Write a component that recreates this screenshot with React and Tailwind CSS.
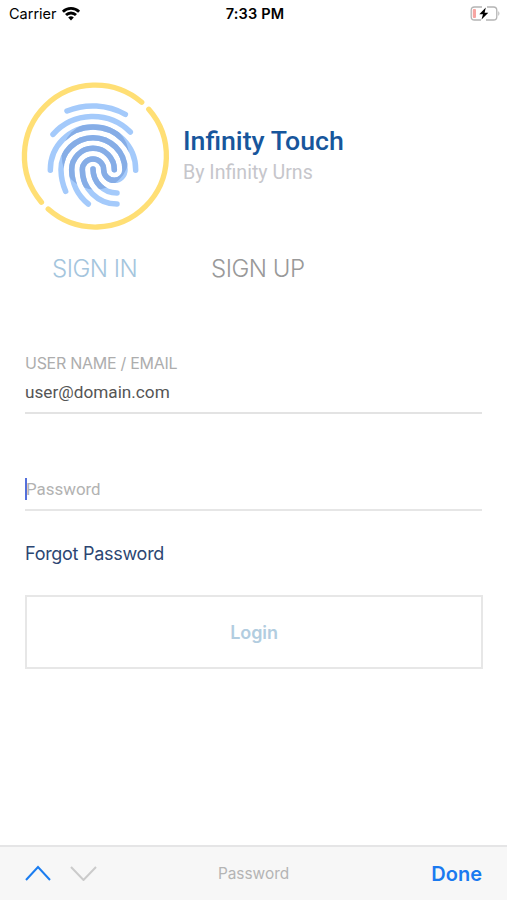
import React from 'react';

const ridges = [
  'M156 108 A203 203 0 0 1 331 118',
  'M114 178 A160 160 0 0 1 346 171',
  'M106 286 V284 A128 128 0 0 1 362 284 V286',
  'M152 349 A168 168 0 0 1 138 284 A96 96 0 0 1 330 284 A32 32 0 0 1 266 284 A32 32 0 0 0 202 284 A104 103 0 0 0 306 387',
  'M298 284 A64 64 0 0 0 170 284 A136 136 0 0 0 220 387',
  'M234 282 A72 72 0 0 0 306 354',
];

const Ridges = ({ color }) => (
  <g stroke={color} strokeWidth="16.5">
    {ridges.map((d) => (
      <path key={d} d={d} />
    ))}
  </g>
);

const FingerprintLogo = () => (
  <svg className="h-40 w-40 shrink-0" viewBox="0 0 480 480" fill="none" strokeLinecap="round">
    <defs>
      <clipPath id="core">
        <circle cx="241" cy="243" r="101" />
      </clipPath>
    </defs>
    <g stroke="#ffdf75" strokeWidth="16">
      <path d="M79.3 381.6 A213 213 0 0 1 380.2 81.8" />
      <path d="M401.3 102.7 A213 213 0 0 1 99.6 402.3" />
    </g>
    <Ridges color="#a4cafb" />
    <g clipPath="url(#core)">
      <Ridges color="#86ade6" />
    </g>
  </svg>
);

const WifiIcon = () => (
  <svg className="ml-[4px] h-[14px] w-[20px]" viewBox="0 0 20 14" fill="none" stroke="#000" strokeWidth="2.8">
    <path d="M1.9 4.8 A11.5 11.5 0 0 1 18.1 4.8" />
    <path d="M5 8.1 A7 7 0 0 1 15 8.1" />
    <path d="M10 13.400 L7.2 10.600 A4 4 0 0 1 12.8 10.600 Z" fill="#000" stroke="none" />
  </svg>
);

const BatteryIcon = () => (
  <svg className="h-[15px] w-[31px]" viewBox="0 0 31 15" fill="none">
    <path d="M12 1 H4.500 Q1.200 1 1.200 4.300 V10.700 Q1.200 14 4.500 14 H11 M16 14 H23.500 Q26.800 14 26.800 10.700 V4.300 Q26.800 1 23.500 1 H17" stroke="#b4b4b4" strokeWidth="1.3" />
    <path d="M28.300 5 Q30.500 7.500 28.300 10 Z" fill="#b4b4b4" />
    <rect x="2.800" y="3" width="3.200" height="9" rx="1" fill="#f7a5a2" />
    <path d="M15.800 1.500 L9.300 8.300 H13 L11.500 13.500 L18.300 6.700 H14.600 Z" fill="#000" />
  </svg>
);

const StatusBar = () => (
  <div className="grid h-[27px] grid-cols-3 items-center pl-[9px] pr-[6px] text-black">
    <div className="flex items-center">
      <span className="text-[14.5px]">Carrier</span>
      <WifiIcon />
    </div>
    <span className="text-center text-[14.5px] font-semibold tracking-[0.2px]">7:33 PM</span>
    <div className="flex justify-end">
      <BatteryIcon />
    </div>
  </div>
);

const App = () => {
  return (
    <div className="flex h-[900px] w-[507px] flex-col overflow-hidden bg-white font-['Inter',sans-serif]">
      <StatusBar />

      <header className="mt-[48px] flex h-40 items-center pl-[15px]">
        <FingerprintLogo />
        <div className="ml-[8px] mt-[3px] font-['Roboto',sans-serif]">
          <h1 className="text-[26.7px] font-medium leading-8 text-[#17569c]">Infinity Touch</h1>
          <p className="text-[19.6px] leading-8 text-[#c6c6cb]">By Infinity Urns</p>
        </div>
      </header>

      <nav className="mt-[18px] flex h-8 items-center pl-[52px] text-[24px] font-light">
        <button className="w-[159px] text-left tracking-[-0.5px] text-[#a4c5dd]">SIGN IN</button>
        <button className="tracking-[-0.5px] text-[#999]">SIGN UP</button>
      </nav>

      <form className="px-[25px]">
        <div className="mt-[66px] h-[63px] border-b-2 border-[#e3e3e3]">
          <label className="block h-6 text-[16px] leading-6 tracking-[-0.28px] text-[#adadad]">USER NAME / EMAIL</label>
          <div className="font-['Roboto',sans-serif] text-[17.2px] leading-[34px] text-[#555]">user@domain.com</div>
        </div>
        <div className="mt-[61px] flex h-[36px] border-b-2 border-[#e6e6e6]">
          <div className="mt-[3px] h-[22px] w-[2px] bg-[#5470dc]" />
          <span className="-ml-px mt-[3px] font-['Roboto',sans-serif] text-[16.9px] leading-[22px] text-[#b2b2b2]">Password</span>
        </div>
        <a className="mt-[31px] block h-6 text-[18px] leading-6 tracking-[-0.28px] text-[#2c4672]">Forgot Password</a>
        <button type="button" className="mt-[29px] block h-[74px] w-[458px] border-2 border-[#e7e7e7] text-[18px] font-semibold tracking-[-0.1px] text-[#b2cde0]">
          Login
        </button>
      </form>

      <footer className="mt-auto grid h-[55px] grid-cols-3 items-center border-t-2 border-[#e5e5e6] bg-[#f7f7f7] px-[25px]">
        <svg className="mb-px h-4 w-[72px]" viewBox="0 0 72 16" fill="none" strokeWidth="2">
          <path d="M1 15 L13 2 L25 15" stroke="#1b7df0" />
          <path d="M46 2 L58.500 15 L71 2" stroke="#cbcbcb" />
        </svg>
        <span className="text-center text-[15.4px] text-[#b4b4b4]">Password</span>
        <span className="text-right text-[20px] font-semibold text-[#1a7af0]">Done</span>
      </footer>
    </div>
  );
};

export default App;
